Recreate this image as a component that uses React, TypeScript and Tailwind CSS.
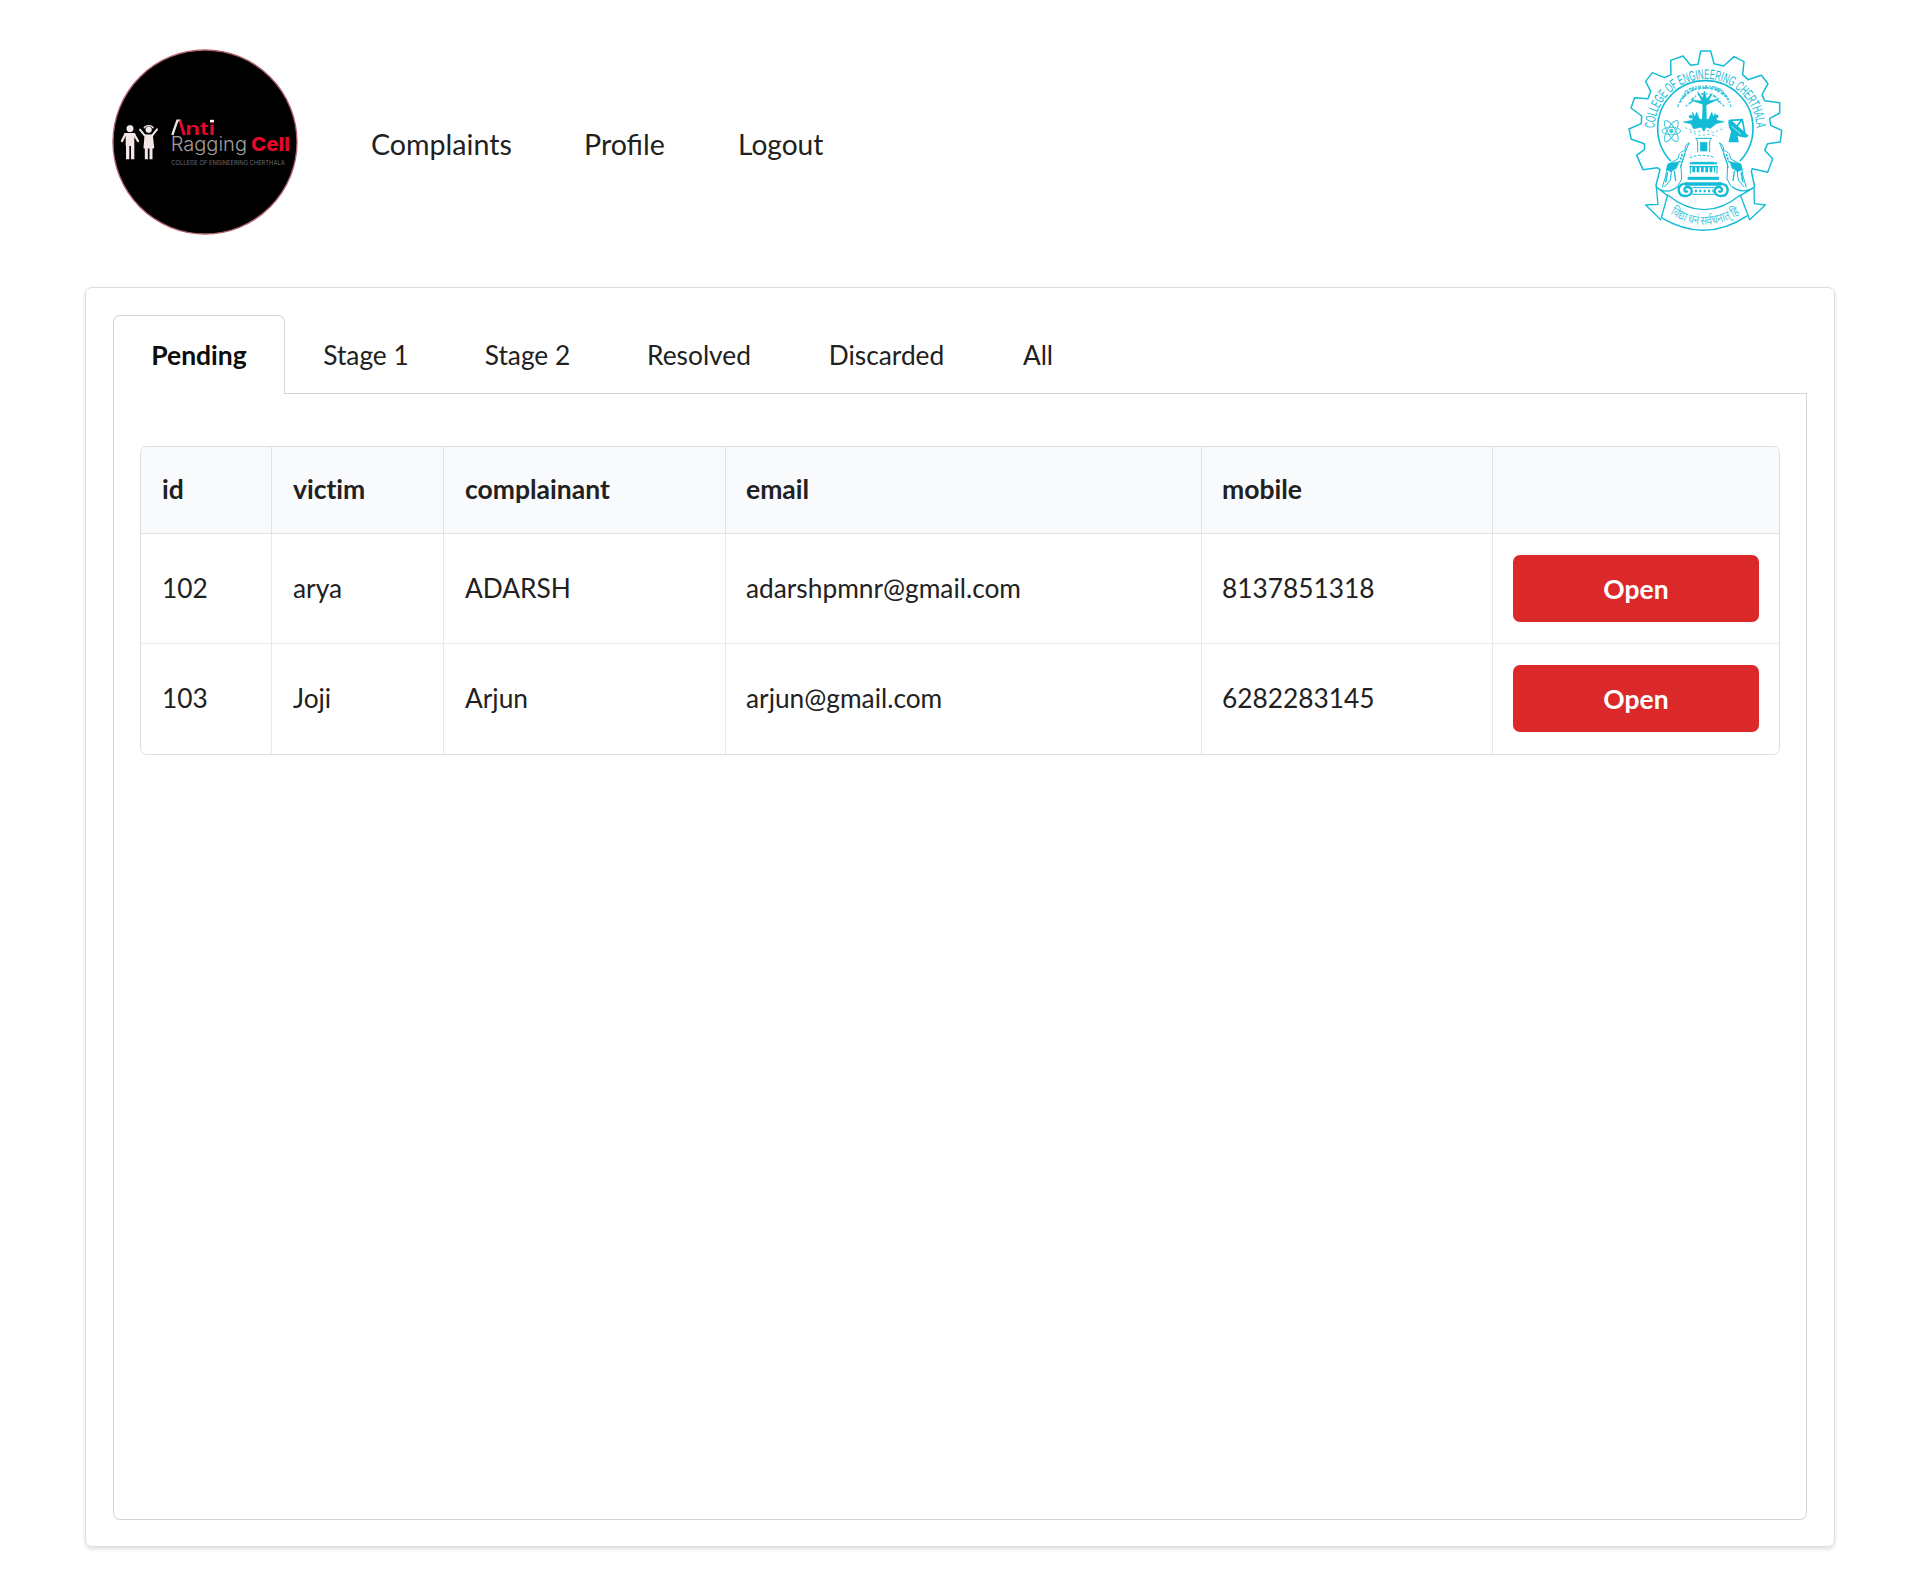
const CYAN = "#12bcd6";

function CellLogo() {
  return (
    <svg width="186" height="187" viewBox="36 25 558 561" className="block shrink-0">
      <circle cx="315" cy="304" r="276" fill="#000" stroke="#b0616c" strokeWidth="4" />
      <g fill="#f3e6e6" stroke="#f3e6e6" strokeLinejoin="round">
        <circle cx="90" cy="264" r="10" strokeWidth="1" />
        <path d="M76 281h26" strokeWidth="8" strokeLinecap="round" />
        <path d="M76 281l-10 20M102 281l12 20" strokeWidth="7" strokeLinecap="round" fill="none" />
        <path d="M79 280h22v34H79z" strokeWidth="4" />
        <path d="M83 314v42M98 314v42" strokeWidth="10" />
        <circle cx="146" cy="267" r="9" strokeWidth="1" />
        <path d="M120 267l14 17M171 266l-14 18" strokeWidth="6" strokeLinecap="round" />
        <path d="M136 284h20l4 37h-27z" strokeWidth="5" />
        <path d="M139 322v34M153 322v34" strokeWidth="9" />
        <path d="M132 263q3-8 14-8t14 8" fill="none" strokeWidth="4" />
      </g>
      <path d="M217 283L232 240h10" stroke="#efe4e4" strokeWidth="7" fill="none" />
      <path d="M240 239l13 44" stroke="#e4082b" strokeWidth="9" />
      <g fontFamily="Inter, sans-serif">
        <text x="256" y="283" fontSize="53" fontWeight="600" fill="#e4082b" textLength="89" lengthAdjust="spacingAndGlyphs">nti</text>
        <path d="M330 241h12" stroke="#fff" strokeWidth="7" />
        <text x="212" y="332" fontSize="58" fontWeight="300" fill="#a39e9e" textLength="229" lengthAdjust="spacingAndGlyphs">Ragging</text>
        <text x="453" y="332" fontSize="58" fontWeight="800" fill="#e4082b" textLength="117" lengthAdjust="spacingAndGlyphs">Cell</text>
        <text x="214" y="373" fontSize="17" fontWeight="400" fill="#6f6b6b" textLength="340" lengthAdjust="spacingAndGlyphs">COLLEGE OF ENGINEERING CHERTHALA</text>
      </g>
    </svg>
  );
}

function Horse() {
  return (
    <g>
      <path d="M240 307c-10 3-14 12-14 24-14 2-20 12-20 24l-32 18-6 34-10 34M226 340l-12 34 2 42-12 22M186 386l-4 34-18 20M238 308l-10 24-16 50" strokeWidth="3" />
      <path d="M176 370l32-6-8 20-16 10-14-6z" fill={CYAN} strokeWidth="2" />
      <path d="M174 396l-6 30M194 392l4 30" strokeWidth="4" />
      <path d="M218 342l-8 24" strokeWidth="5" strokeDasharray="6 4" />
    </g>
  );
}

function CollegeEmblem() {
  return (
    <svg width="158" height="184" viewBox="52 26 474 552" className="block shrink-0" fill="none" stroke={CYAN}>
      <defs>
        <path id="ring" d="M134 268A153 152 0 0 1 440 268" />
        <path id="ribbon" d="M182 520Q284 588 394 518" />
      </defs>
      <path
        strokeWidth="4.5"
        strokeLinejoin="round"
        d="M140 440L139 434L151 388L143 382L100 388L81 345L105 327L104 310L65 297L58 266L95 250L96 227L64 203L75 172L115 175L123 153L108 123L128 97L165 112L184 103L183 60L220 47L243 75L265 72L273 32H303L313 70L342 77L373 49L403 64L399 103L415 118L455 105L475 130L457 163L465 181L510 187V218L480 235L483 255L516 270L512 305L474 310L465 330L489 355L474 396L428 385L425 392L435 440"
      />
      <path strokeWidth="5" d="M183 362A143 143 0 1 1 391 362" />
      <text fontFamily="Liberation Sans, sans-serif" fontSize="42" fill={CYAN} stroke="none">
        <textPath href="#ring" startOffset="4" textLength="470" lengthAdjust="spacingAndGlyphs">COLLEGE OF ENGINEERING CHERTHALA</textPath>
      </text>

      {/* tree */}
      <path fill={CYAN} strokeWidth="2" d="M278 240l2-48-34-12 30 2-12-28 15 20 6-22 5 24 18-16-12 22 31-6-38 18 1 46z" />
      <path strokeWidth="6" opacity="0.8" strokeDasharray="6 5 11 4 4 6" d="M212 186q20-44 76-43t72 43M224 168q26-26 62-26t60 26M240 190q14-30 46-30t48 30" />
      <path strokeWidth="4" opacity="0.8" strokeDasharray="8 5 4 4" d="M204 200q18-54 54-62M364 200q-16-52-54-62M226 154q60-34 120 0M250 182l-22 16M322 180l22 18" />
      <path fill={CYAN} strokeWidth="2" d="M221 245l28-5v-24l6 14 6-14 8 20 11 2h8l10-2 8-20 5 14 5-10 5 20 22 4-24 6-16 14-14-3-6 12-8-12-24 4-6-14z" />
      <circle cx="243" cy="229" r="5" fill={CYAN} />
      <circle cx="321" cy="228" r="5" fill={CYAN} />
      <path strokeWidth="3" opacity="0.7" strokeDasharray="7 7" d="M226 262l34 14 24-8 28 8 34-14M240 274l30 12 28-4 26 6" />

      {/* atom */}
      <g strokeWidth="3" opacity="0.8">
        <ellipse cx="185" cy="272" rx="28" ry="11" />
        <ellipse cx="185" cy="272" rx="36" ry="12" transform="rotate(60 185 272)" />
        <ellipse cx="185" cy="272" rx="36" ry="12" transform="rotate(120 185 272)" />
        <circle cx="185" cy="272" r="5" fill={CYAN} />
      </g>

      {/* dish antenna */}
      <path fill={CYAN} strokeWidth="4" d="M358 242q-2 42 50 48l6-4-54-44zM366 274l-7 30h26l-4-22z" />
      <path strokeWidth="5" d="M360 240l38-2 8 44M398 238l-24 28M362 240l44 40" />
      <path stroke="#fff" strokeWidth="2" d="M366 258l28 24" />

      {/* pedestal */}
      <path strokeWidth="3" d="M264 336v-34l-6-8h48l-6 8v34M248 366h66" />
      <path strokeWidth="3" strokeDasharray="8 5" d="M240 352q40-14 74 0" />
      <path fill={CYAN} strokeWidth="2" d="M272 306h20v26h-20z" />
      <path strokeWidth="6" d="M240 369h82" />
      <path strokeWidth="18" strokeDasharray="8 5" d="M248 387h68" />
      <path strokeWidth="4" d="M240 379h84" />
      <path strokeWidth="9" d="M234 414h94" />
      <path strokeWidth="3" d="M242 376v24M322 376v24" />
      <Horse />
      <g transform="matrix(-1 0 0 1 568 0)">
        <Horse />
      </g>

      {/* capital with volutes */}
      <path strokeWidth="10" d="M226 431h110" />
      <path strokeWidth="7" d="M236 430q-30-2-29 20 2 18 22 17 18-2 17-16-2-12-14-11-10 2-7 12 5 5 9-1M324 430q30-2 30 20-2 18-22 17-18-2-17-16 2-12 14-11 10 2 7 12-5 5-9-1" />
      <path strokeWidth="8" strokeDasharray="6 7" d="M256 452h56" />
      <path strokeWidth="3" d="M248 442h66M248 462h66" />

      {/* ribbon */}
      <path
        strokeWidth="4"
        strokeLinejoin="round"
        d="M174 464Q284 552 392 464L415 525Q286 611 155 532ZM174 466L140 440L145 492L108 494L155 540M392 466L433 441L434 490L467 494L420 538L415 525M140 440q30 26 66-2M366 438q30 26 69 2"
      />
      <text fontFamily="Noto Sans CJK SC, Noto Sans, sans-serif" fontSize="38" fill={CYAN} stroke="none" opacity="0.8">
        <textPath href="#ribbon" textLength="222" lengthAdjust="spacingAndGlyphs">विद्या धनं सर्वधनात् हि</textPath>
      </text>
    </svg>
  );
}

const tabs = [
  { label: "Stage 1", width: "w-[161px]" },
  { label: "Stage 2", width: "w-[162px]" },
  { label: "Resolved", width: "w-[181px]" },
  { label: "Discarded", width: "w-[194px]" },
  { label: "All", width: "w-[109px]" },
];

const rows = [
  ["102", "arya", "ADARSH", "adarshpmnr@gmail.com", "8137851318"],
  ["103", "Joji", "Arjun", "arjun@gmail.com", "6282283145"],
];

const columns = ["id", "victim", "complainant", "email", "mobile", ""];

export default function App() {
  return (
    <div className="h-[1572px] w-[1920px] overflow-hidden bg-white font-['Lato',sans-serif] text-[26.3px] leading-[34px] text-[#212121]">
      <header className="flex h-[287px] items-start pt-[49px] pr-[135px] pl-28">
        <CellLogo />
        <nav className="mt-[78px] ml-[73px] flex text-[28.6px]">
          <a className="w-[213px]">Complaints</a>
          <a className="w-[154px]">Profile</a>
          <a className="text-[28.1px]">Logout</a>
        </nav>
        <div className="ml-auto">
          <CollegeEmblem />
        </div>
      </header>

      <main className="ml-[85px] flex h-[1260px] w-[1750px] flex-col rounded-[7px] border border-[#dededf] px-[27px] pt-[27px] pb-[26px] shadow-[0_2px_4px_0_rgba(34,36,38,0.15)] [font-variant-ligatures:none]">
        <div className="flex h-[79px] shrink-0">
          <button className="w-[172px] rounded-t-[7px] border border-b-0 border-[#d4d4d5] pb-px text-center text-[26.5px] font-bold text-[#0d0d0d]">
            Pending
          </button>
          <div className="flex flex-1 border-b border-[#d4d4d5] pt-px">
            {tabs.map((t) => (
              <button key={t.label} className={`${t.width} pt-px pl-px text-center`}>
                {t.label}
              </button>
            ))}
          </div>
        </div>

        <section className="flex-1 rounded-b-[7px] border border-t-0 border-[#d4d4d5] px-[26px] pt-[52px]">
          <table className="w-[1640px] table-fixed border-separate border-spacing-0 overflow-hidden rounded-[7px] border border-[#dededf] text-left">
            <colgroup>
              <col className="w-[130px]" />
              <col className="w-[172px]" />
              <col className="w-[282px]" />
              <col className="w-[476px]" />
              <col className="w-[291px]" />
              <col />
            </colgroup>
            <thead>
              <tr className="h-[87px] bg-[#f9fafb]">
                {columns.map((c, i) => (
                  <th key={c} className={`border-b border-[#e1e2e3] pb-0.5 text-[26.5px] font-bold ${i ? "border-l" : ""} ${i > 2 ? "pl-5" : "pl-[21px]"}`}>
                    {c}
                  </th>
                ))}
              </tr>
            </thead>
            <tbody>
              {rows.map((r, n) => (
                <tr key={r[0]} className={n ? "h-[109.5px]" : "h-[110px]"}>
                  {r.map((v, i) => (
                    <td key={v} className={`border-[#e9e9ea] pb-px ${i ? "border-l" : ""} ${i > 2 ? "pl-5" : "pl-[21px]"} ${n ? "" : "border-b"}`}>
                      {v}
                    </td>
                  ))}
                  <td className={`border-l border-[#e9e9ea] px-5 ${n ? "" : "border-b"}`}>
                    <button className="block h-[67px] w-[246px] rounded-[7px] bg-[#db2828] text-[26.5px] font-bold text-white">Open</button>
                  </td>
                </tr>
              ))}
            </tbody>
          </table>
        </section>
      </main>
    </div>
  );
}
